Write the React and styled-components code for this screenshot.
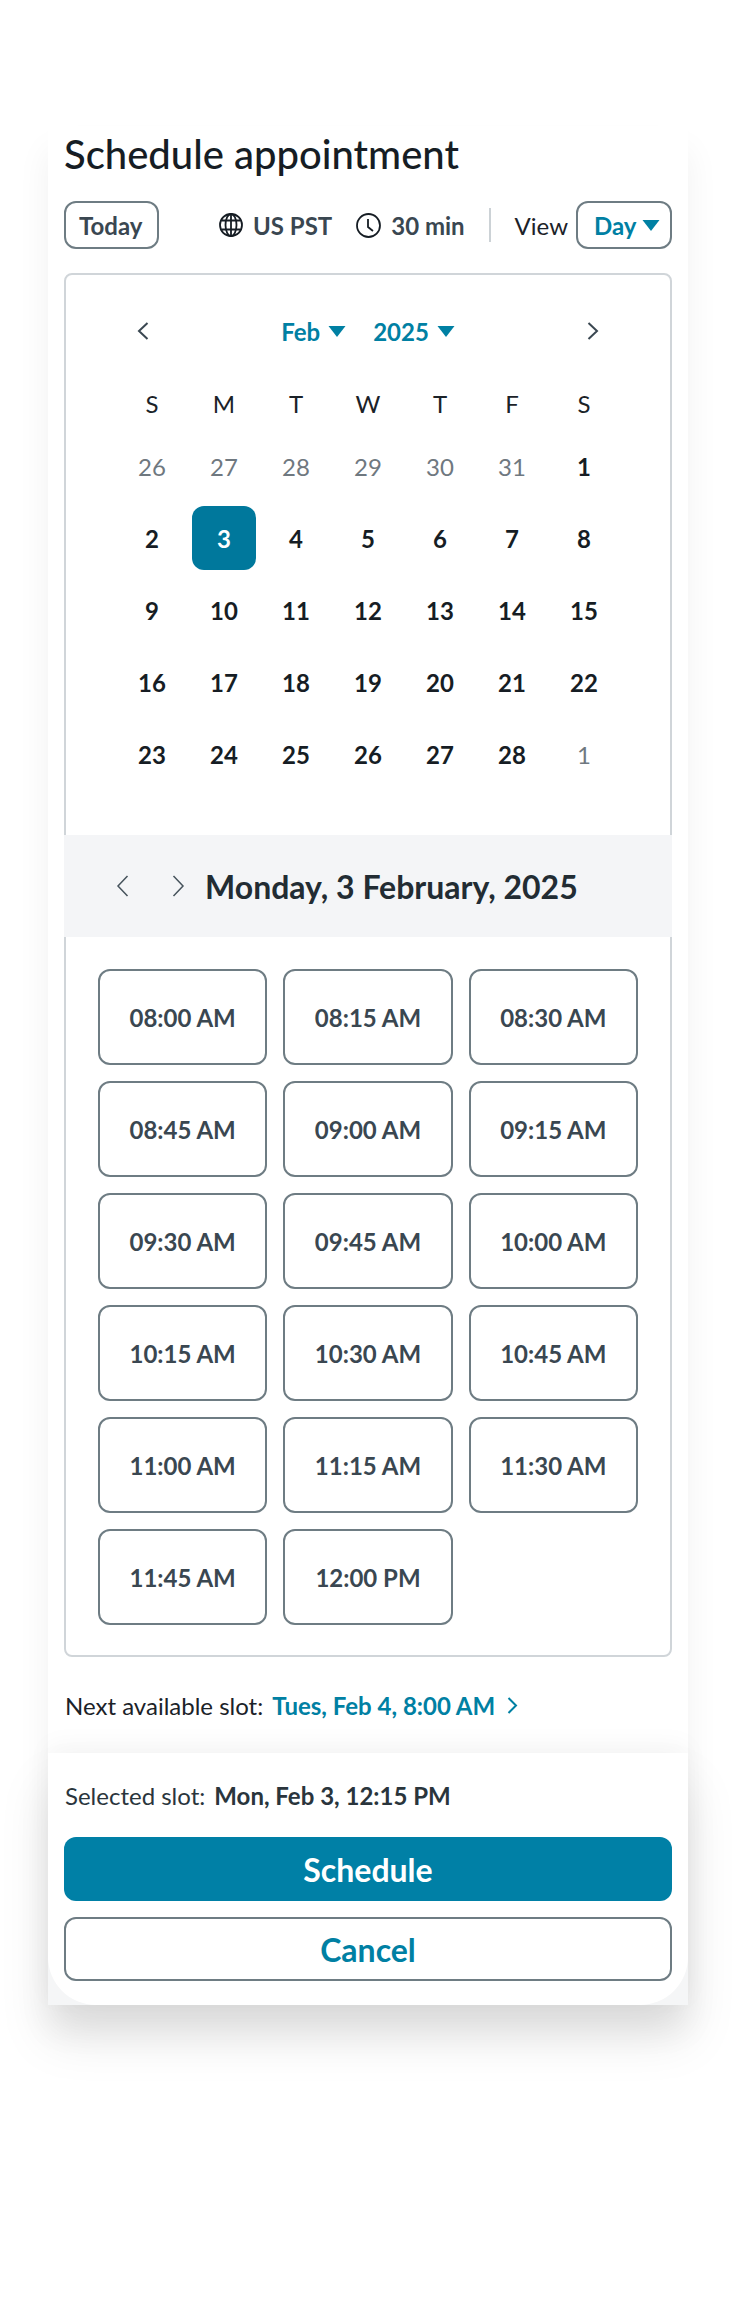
import React from "react";
import styled, { createGlobalStyle } from "styled-components";

const GlobalStyle = createGlobalStyle`
  html, body {
    margin: 0;
    padding: 0;
    background: #fff;
  }
  body {
    font-family: "Lato", "Open Sans", sans-serif;
    color: #1b2228;
  }
  * {
    box-sizing: border-box;
  }
`;

const Page = styled.div`
  width: 738px;
  height: 2306px;
  padding: 126px 50px 0 48px;
  overflow: hidden;
`;
const Card = styled.div`
  width: 640px;
  background: #fff;
  box-shadow: 0 24px 32px rgba(0, 0, 0, 0.06);
`;
const Body = styled.div`
  padding: 0 16px;
  background: #fff;
`;
const Title = styled.h1`
  margin: 0;
  font-size: 40px;
  line-height: 56px;
  font-weight: 500;
  color: #161d24;
`;
const Toolbar = styled.div`
  display: flex;
  align-items: center;
  margin-top: 19px;
  height: 48px;
  white-space: nowrap;
`;
const OutlineButton = styled.button`
  width: ${(p) => p.$width}px;
  height: 48px;
  padding: 0 10px 0 ${(p) => p.$padLeft}px;
  display: inline-flex;
  align-items: center;
  justify-content: space-between;
  flex: none;
  background: #fff;
  border: 2px solid #6e7c83;
  border-radius: 12px;
  font: 700 24px "Lato", sans-serif;
  color: ${(p) => p.$color || "#3a4751"};
`;
const Meta = styled.div`
  display: flex;
  align-items: center;
  gap: 10px;
  font-size: 24px;
  font-weight: 700;
  color: #3a4751;
  margin-left: ${(p) => p.$left}px;
`;
const Divider = styled.div`
  width: 2px;
  height: 34px;
  background: #ccd2d6;
  margin: 0 22px 0 24px;
`;
const ViewLabel = styled.span`
  font-size: 24px;
  color: #1b2228;
  margin-right: 8px;
  margin-left: auto;
`;
const Caret = styled.svg`
  width: 18px;
  height: 11px;
  fill: #0080a3;
`;
const Box = styled.div`
  margin-top: 24px;
  border: 2px solid #d0d5d9;
  border-radius: 8px;
  width: 608px;
`;
const Calendar = styled.div`
  padding: 0 50px 45px;
`;
const MonthNav = styled.div`
  height: 102px;
  padding: 10px 21px 0;
  display: flex;
  align-items: center;
  justify-content: space-between;
`;
const MonthPick = styled.div`
  display: flex;
  align-items: center;
  gap: 27px;
`;
const Pick = styled.div`
  display: flex;
  align-items: center;
  gap: 8px;
  font-size: 24px;
  font-weight: 700;
  color: #0080a3;
`;
const DayGrid = styled.div`
  display: grid;
  grid-template-columns: repeat(7, 72px);
  grid-template-rows: 53px repeat(5, 72px);
  justify-items: center;
  align-items: center;
`;
const WeekName = styled.div`
  font-size: 24px;
  color: #1b2228;
`;
const Day = styled.div`
  width: 64px;
  height: 64px;
  border-radius: 12px;
  display: flex;
  align-items: center;
  justify-content: center;
  font-size: 24px;
  font-weight: ${(p) => (p.$muted ? 400 : 700)};
  color: ${(p) => (p.$selected ? "#fff" : p.$muted ? "#6f787f" : "#161d24")};
  background: ${(p) => (p.$selected ? "#00789c" : "transparent")};
`;
const DayBar = styled.div`
  height: 102px;
  margin: 0 -2px;
  background: #f4f5f7;
  display: flex;
  align-items: center;
  padding-left: 52px;
  font-size: 32px;
  font-weight: 700;
  color: #222c33;
`;
const BarArrows = styled.div`
  display: flex;
  align-items: center;
  gap: 43px;
  margin-right: 20px;
`;
const Slots = styled.div`
  padding: 32px 32px 30px;
  display: grid;
  grid-template-columns: repeat(3, 1fr);
  grid-auto-rows: 96px;
  gap: 16px;
`;
const Slot = styled.div`
  border: 2px solid #6e7c83;
  border-radius: 12px;
  display: flex;
  align-items: center;
  justify-content: center;
  font-size: 24px;
  font-weight: 700;
  color: #3a4751;
`;
const SlotLine = styled.div`
  display: flex;
  align-items: center;
  height: 96px;
  padding: 1px 1px 0;
  font-size: 24px;
  gap: 9px;
`;
const SlotLink = styled.span`
  display: inline-flex;
  align-items: center;
  gap: 12px;
  color: #0080a3;
  font-weight: 700;
`;
const FooterShell = styled.div`
  background: #f5f6f7;
  box-shadow: 0 32px 48px rgba(0, 0, 0, 0.1), 0 -8px 24px rgba(0, 0, 0, 0.04);
  position: relative;
`;
const Footer = styled.div`
  padding: 0 16px 24px;
  border-radius: 0 0 48px 48px;
  background: #fff;
`;
const Selected = styled.div`
  display: flex;
  align-items: center;
  height: 84px;
  padding: 1px 1px 0;
  font-size: 24px;
  gap: 9px;
  color: #2a353c;
  b {
    font-weight: 700;
  }
`;
const WideButton = styled.button`
  display: block;
  width: 608px;
  height: 64px;
  border-radius: 12px;
  border: ${(p) => (p.$primary ? "none" : "2px solid #6e7c83")};
  background: ${(p) => (p.$primary ? "#0080a6" : "#fff")};
  color: ${(p) => (p.$primary ? "#fff" : "#0080a3")};
  font: 700 32px "Lato", sans-serif;
  margin-top: ${(p) => (p.$primary ? 0 : 16)}px;
`;

const CaretDown = () => (
  <Caret viewBox="0 0 18 11">
    <path d="M0.5 0h17L9 11z" />
  </Caret>
);
const Chevron = ({ left, w = 12, h = 18, color = "#3a4751", sw = 2 }) => (
  <svg width={w} height={h} viewBox={`0 0 ${w} ${h}`} fill="none" stroke={color} strokeWidth={sw}>
    <path d={left ? `M${w - 1.5} 1 2 ${h / 2}l${w - 3.5} ${h / 2 - 1}` : `M1.5 1 ${w - 2} ${h / 2}l-${w - 3.5} ${h / 2 - 1}`} />
  </svg>
);
const Globe = () => (
  <svg width="24" height="24" viewBox="0 0 24 24" fill="none" stroke="#161d24" strokeWidth="1.8">
    <circle cx="12" cy="12" r="11" />
    <ellipse cx="12" cy="12" rx="5.5" ry="11" />
    <path d="M12 1v22M2.2 7.5h19.6M2.2 16.5h19.6" />
  </svg>
);
const Clock = () => (
  <svg width="25" height="25" viewBox="0 0 25 25" fill="none" stroke="#161d24" strokeWidth="1.8">
    <circle cx="12.5" cy="12.5" r="11.5" />
    <path d="M12 6v8l5 4" />
  </svg>
);

const weekNames = ["S", "M", "T", "W", "T", "F", "S"];
const days = [
  [26, 1], [27, 1], [28, 1], [29, 1], [30, 1], [31, 1], [1],
  [2], [3], [4], [5], [6], [7], [8],
  [9], [10], [11], [12], [13], [14], [15],
  [16], [17], [18], [19], [20], [21], [22],
  [23], [24], [25], [26], [27], [28], [1, 1],
];
const times = [
  "08:00 AM", "08:15 AM", "08:30 AM",
  "08:45 AM", "09:00 AM", "09:15 AM",
  "09:30 AM", "09:45 AM", "10:00 AM",
  "10:15 AM", "10:30 AM", "10:45 AM",
  "11:00 AM", "11:15 AM", "11:30 AM",
  "11:45 AM", "12:00 PM",
];

const App = () => {
  return (
    <Page>
      <GlobalStyle />
      <Card>
        <Body>
          <Title>Schedule appointment</Title>
          <Toolbar>
            <OutlineButton $width={95} $padLeft={13}>Today</OutlineButton>
            <Meta $left={60}>
              <Globe />
              US PST
            </Meta>
            <Meta $left={24}>
              <Clock />
              30 min
            </Meta>
            <Divider />
            <ViewLabel>View</ViewLabel>
            <OutlineButton $width={96} $padLeft={16} $color="#0080a3">
              Day
              <CaretDown />
            </OutlineButton>
          </Toolbar>
          <Box>
            <Calendar>
              <MonthNav>
                <Chevron left />
                <MonthPick>
                  <Pick>
                    Feb
                    <CaretDown />
                  </Pick>
                  <Pick>
                    2025
                    <CaretDown />
                  </Pick>
                </MonthPick>
                <Chevron />
              </MonthNav>
              <DayGrid>
                {weekNames.map((n, i) => (
                  <WeekName key={i}>{n}</WeekName>
                ))}
                {days.map(([d, muted], i) => (
                  <Day key={i} $muted={muted} $selected={i === 8}>
                    {d}
                  </Day>
                ))}
              </DayGrid>
            </Calendar>
            <DayBar>
              <BarArrows>
                <Chevron left w={13} h={22} sw={1.5} color="#46535c" />
                <Chevron w={13} h={22} sw={1.5} color="#46535c" />
              </BarArrows>
              Monday, 3 February, 2025
            </DayBar>
            <Slots>
              {times.map((t) => (
                <Slot key={t}>{t}</Slot>
              ))}
            </Slots>
          </Box>
          <SlotLine>
            Next available slot:
            <SlotLink>
              Tues, Feb 4, 8:00 AM
              <Chevron w={11} h={17} color="#0080a3" />
            </SlotLink>
          </SlotLine>
        </Body>
        <FooterShell>
          <Footer>
            <Selected>
              Selected slot:
              <b>Mon, Feb 3, 12:15 PM</b>
            </Selected>
            <WideButton $primary>Schedule</WideButton>
            <WideButton>Cancel</WideButton>
          </Footer>
        </FooterShell>
      </Card>
    </Page>
  );
};

export default App;
